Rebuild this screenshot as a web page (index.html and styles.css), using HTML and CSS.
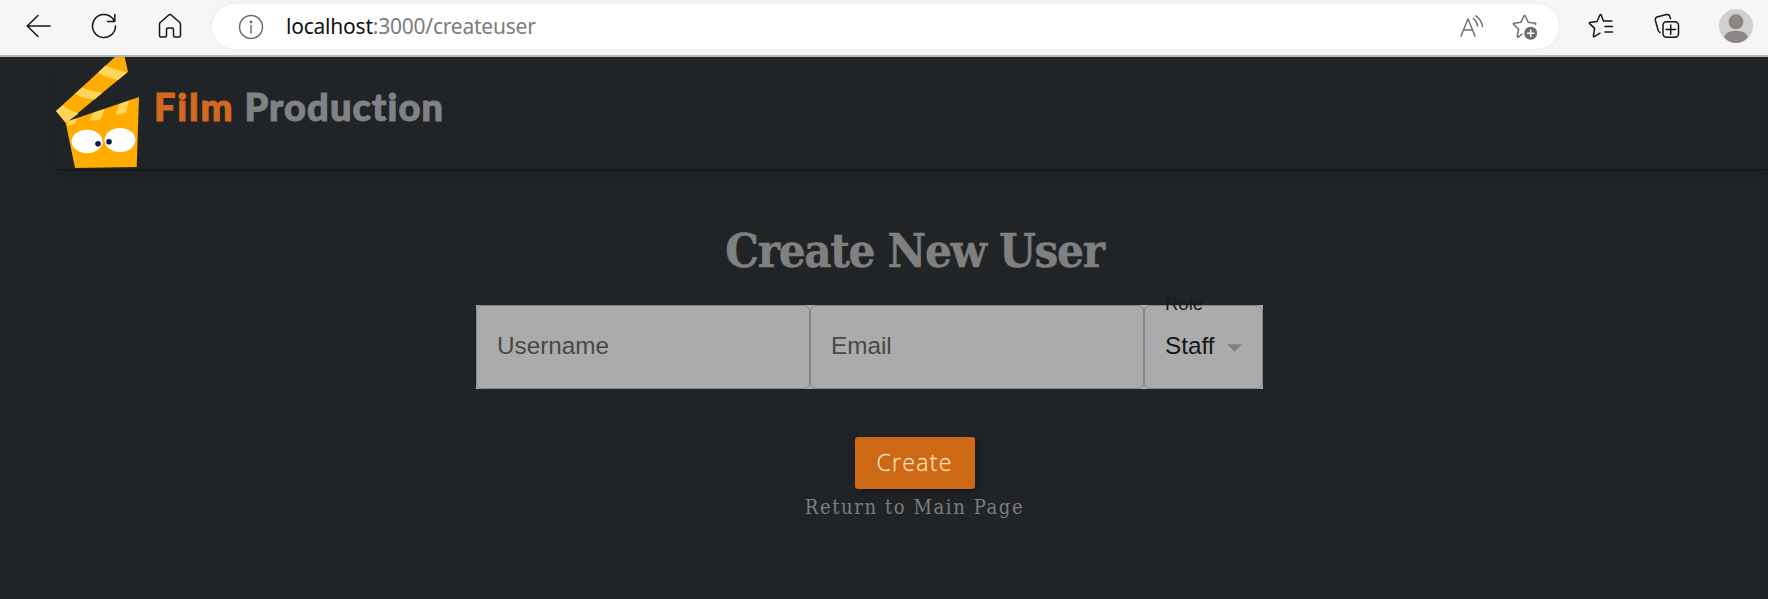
FILE: index.html
```html
<!DOCTYPE html>
<html lang="en">
<head>
<meta charset="utf-8">
<title>Film Production</title>
<link rel="stylesheet" href="styles.css">
</head>
<body>
<div class="toolbar">
  <div class="nav-buttons">
    <svg class="icon" viewBox="0 0 26 26"><path d="M13 2.500 2.200 13 13 23.500M2.200 13H25"/></svg>
    <svg class="icon" viewBox="0 0 26 26"><path d="M24.500 13A11.500 11.500 0 1 1 21.500 5.300L23.500 8M23.800 1.500V8.500H16.500"/></svg>
    <svg class="icon" viewBox="0 0 26 26"><path d="M2.500 11.200Q2.500 10 3.500 9.200L11.500 2.200Q13 1 14.500 2.200L22.500 9.200Q23.500 10 23.500 11.200V22.500Q23.500 24 22 24H18Q16.500 24 16.500 22.500V16.500Q16.500 15 15 15H11Q9.500 15 9.500 16.500V22.500Q9.500 24 8 24H4Q2.500 24 2.500 22.500Z"/></svg>
  </div>
  <div class="address">
    <svg class="icon muted" viewBox="0 0 26 26"><circle cx="13" cy="13" r="11.500"/><path d="M13 11.500V19"/><circle cx="13" cy="8" r=".7"/></svg>
    <span class="url">localhost<span class="url-rest">:3000/createuser</span></span>
    <svg class="icon muted read" viewBox="0 0 26 26"><path d="M3 22 10 5 17 22M5.500 16H14.500M15.500 4.500Q19 7.500 19.500 12M17.800 1.800Q23.500 5.500 24.500 12.500"/></svg>
    <svg class="icon muted" viewBox="0 0 26 26"><path d="M11 20 7.400 23.100Q6.300 23.500 6.400 22.200L7.600 15.200 2.600 10.400Q1.900 9.500 3 9.200L10 8.200 13 2Q13.600 1.200 14.200 2L17.200 8.200 24.200 9.200Q25.200 9.500 24.500 10.400"/><circle class="badge" cx="19.700" cy="19.200" r="6.500"/><path class="plus" d="M19.700 16v6.400M16.500 19.200h6.400"/></svg>
  </div>
  <div class="tools">
    <svg class="icon" viewBox="0 0 26 26"><path d="M12 20.200 6.400 23.600Q5.300 24 5.400 22.800L6.600 15.400 1.600 10.600Q.9 9.700 2 9.500L9 8.500 12 2Q12.600 1.200 13.200 2L15.500 8H24M17 13.500H24.500M17 19H24.500"/></svg>
    <svg class="icon" viewBox="0 0 26 26"><path d="M6 19.500Q4.800 18.800 4.200 17.500L1.400 7.500Q.8 5 3 4L12.500 1.500Q15.300 1 16 4L16.500 5.500"/><rect x="9" y="8.800" width="15.500" height="15.500" rx="3.500"/><path d="M16.700 12V21.300M12 16.600H21.500"/></svg>
    <svg class="avatar" viewBox="0 0 34 34"><circle cx="17" cy="17" r="17" fill="#d2d0ce"/><circle cx="17" cy="12.700" r="7.400" fill="#8a8583"/><path d="M5 28Q8 21.800 17 21.800T29 28Q24 34 17 34T5 28Z" fill="#8a8583"/></svg>
  </div>
</div>
<header class="site-header">
  <svg class="logo" viewBox="56 57 84 112">
    <path fill="#ffab00" d="M115 57H124.700L128 71.700 68.300 121 139 97 136.700 167 75 168 65.700 122.700 56 111Z"/>
    <path fill="#ffd65c" d="M105.500 65.500 98 72.500Q107 78 118 80L127 72.500Q116 70 105.500 65.500ZM82 87.500 75 94Q85 99 94.500 99.500L102 93Q91 91.500 82 87.500ZM62.500 105.500 56 111 65.700 122.700 68.300 121 78.500 113.500Q70 110.500 62.500 105.500ZM68.300 121 77 118.500Q76 124 73 124.500L67 126ZM93.500 112.700 104.500 109 101 119Q95 121 89 120.500ZM119.500 104 129 100.500 126 112.500Q120 115 115.500 114.500Z"/>
    <ellipse cx="87" cy="141.500" rx="15.500" ry="11.700" fill="#fff"/><ellipse cx="120" cy="140" rx="15.500" ry="12" fill="#fff"/>
    <circle cx="98" cy="143.700" r="2.800" fill="#001b4c"/><circle cx="109" cy="141.700" r="2.800" fill="#001b4c"/>
  </svg>
  <div class="brand"><span class="brand-film">Film</span> <span class="brand-name">Production</span></div>
</header>
<main class="page">
  <h1 class="heading">Create New User</h1>
  <form class="fields">
    <div class="field">Username</div>
    <div class="field">Email</div>
    <div class="field select"><span class="label">Role</span>Staff<svg class="arrow" viewBox="0 0 14 7"><path d="M0 0H14L7 7Z"/></svg></div>
  </form>
  <button class="create" type="button">Create</button>
  <a class="return">Return to Main Page</a>
</main>
</body>
</html>
```
FILE: styles.css
```css
* { box-sizing: border-box; }
body { margin: 0; height: 599px; overflow: hidden; background: #212426; font-family: "Liberation Sans", Arial, sans-serif; }
.toolbar { display: flex; align-items: center; height: 57px; padding: 0 15px 4px 25px; background: #f6f6f6; border-bottom: 2px solid #b5b7b8; }
.nav-buttons { display: flex; gap: 40px; width: 187px; }
.icon { flex: none; width: 26px; height: 26px; fill: none; stroke: #161616; stroke-width: 1.5; stroke-linecap: round; stroke-linejoin: round; }
.muted { stroke: #707070; }
.address { display: flex; align-items: center; width: 1347px; height: 45px; margin-top: 2px; padding: 0 22px 0 26px; border-radius: 23px; background: #fff; box-shadow: 0 0 4px #e6e6e6; }
.url { margin: -1px 0 0 22px; font: 21px/28px "Noto Sans", sans-serif; letter-spacing: -.22px; color: #111; }
.url-rest { color: #7c7c7c; }
.read { margin: 0 27px 0 auto; }
.badge { fill: #6c6c6c; stroke: none; }
.plus { stroke: #fff; }
.tools { display: flex; align-items: center; flex: 1; justify-content: space-between; padding-left: 29px; }
.avatar { width: 34px; height: 34px; }
.site-header { display: flex; height: 113px; margin-left: 56px; border-bottom: 1px solid #15181a; box-shadow: 0 7px 7px -5px #191c1e; }
.logo { width: 84px; height: 112px; }
.brand { margin: 25px 0 0 14px; font: 900 38px/48px Lato, sans-serif; letter-spacing: 1.1px; -webkit-text-stroke: 1px; white-space: nowrap; color: #808285; }
.brand-film { letter-spacing: 1.8px; color: #d2691e; }
.page { display: flex; flex-direction: column; align-items: center; padding-left: 61px; }
.heading { margin: 51px 0 0; font: bold 47px/60px "Roboto Slab", "DejaVu Serif Condensed", "DejaVu Serif", serif; letter-spacing: -1.3px; -webkit-text-stroke: .5px; white-space: nowrap; color: #808080; }
.fields { display: flex; width: 787px; height: 84px; margin: 24px 91px 0 0; background: #ababab; }
.field { position: relative; width: 334px; padding: 0 20.5px; border: 1px solid #858585; border-radius: 6px; font-size: 24.3px; line-height: 80px; color: #484848; }
.select { width: 119px; color: #151515; }
.label { position: absolute; left: 20.5px; top: -13px; font-size: 18.5px; line-height: 21px; color: #1b1b1b; }
.arrow { position: absolute; right: 20px; top: 38px; width: 15px; height: 8px; fill: #808080; }
.create { width: 120px; height: 52px; margin-top: 48px; padding: 0 0 2px; border: 0; border-radius: 3px; background: #cd6814; box-shadow: 3px 4px 8px #15181a; font: 300 23px "Open Sans", sans-serif; letter-spacing: 1.3px; -webkit-text-stroke: .3px; color: #ffdfb8; }
.return { margin-top: 5px; font: 20px/27px "Roboto Slab", "DejaVu Serif Condensed", "DejaVu Serif", serif; letter-spacing: 1.6px; white-space: nowrap; color: #7c7e80; }
```
